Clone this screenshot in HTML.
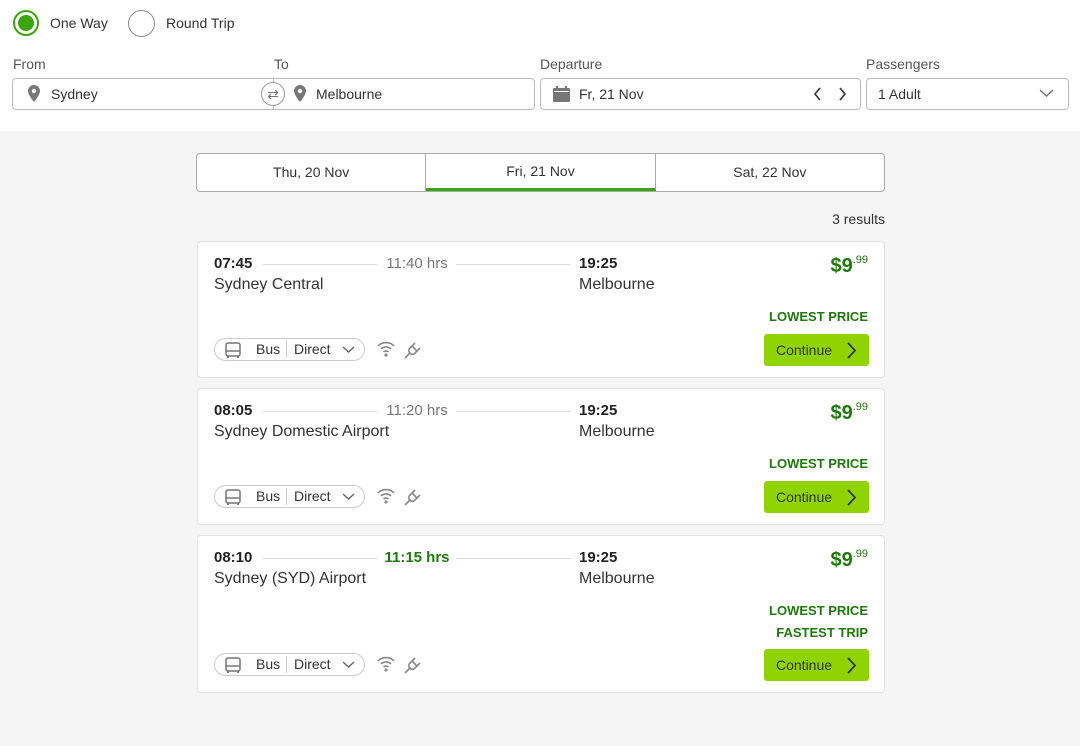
<!DOCTYPE html>
<html><head><meta charset="utf-8"><style>
*{box-sizing:border-box;margin:0;padding:0}
body{width:1080px;height:746px;background:#f5f5f5;font-family:"Liberation Sans",sans-serif;color:#333;position:relative;overflow:hidden;font-size:14px}
.a{position:absolute}
.hdr{left:0;top:0;width:1080px;height:131px;background:#fff}
.lbl{color:#555;font-size:14px}
.box{border:1px solid #bbb;border-radius:4px;background:#fff;height:32px}
.tabs{left:196px;top:153px;width:689px;height:39px;border:1px solid #aaa;border-radius:4px;background:#fff;display:flex}
.tabs div{flex:1;text-align:center;line-height:37px;font-size:14px;color:#333;border-right:1px solid #aaa}
.tabs div:last-child{border-right:none}
.card{left:197px;width:688px;background:#fff;border:1px solid #e2e2e2;border-radius:4px}
.t{font-weight:bold;font-size:15px;color:#222;top:13px}
.st{font-size:16px;color:#333;top:34px}
.ln{height:1px;background:#ddd;top:22px}
.dur{top:13px;font-size:15px;color:#777;width:80px;text-align:center;left:179px}
.pr{right:16px;top:12px;color:#1e7a0a;font-weight:bold;font-size:20px}
.pr sup{font-size:11px;vertical-align:9px;font-weight:normal}
.tag{right:16px;color:#1e7a0a;font-weight:bold;font-size:13px}
.pill{left:16px;width:151px;height:23px;border:1px solid #ccc;border-radius:12px;font-size:14px;color:#333}
.btn{left:566px;width:105px;height:32px;background:#8fd400;border-radius:3px;font-size:14px;color:#333;line-height:32px;padding-left:12px}
</style></head><body>
<div class="a hdr"></div>
<div class="a" style="left:13px;top:10px;width:26px;height:26px;border:2px solid #3aa50c;border-radius:50%"><div style="margin:3px;width:16px;height:16px;border-radius:50%;background:#3aa50c"></div></div>
<div class="a" style="left:50px;top:15px;font-size:14px">One Way</div>
<div class="a" style="left:128px;top:10px;width:27px;height:27px;border:1.5px solid #888;border-radius:50%"></div>
<div class="a" style="left:166px;top:15px;font-size:14px">Round Trip</div>
<div class="a lbl" style="left:13px;top:56px">From</div>
<div class="a lbl" style="left:274px;top:56px">To</div>
<div class="a lbl" style="left:540px;top:56px">Departure</div>
<div class="a lbl" style="left:866px;top:56px">Passengers</div>
<div class="a box" style="left:12px;top:78px;width:523px"></div>
<div class="a" style="left:273px;top:78px;width:1px;height:32px;background:#bbb"></div>
<div class="a" style="left:261px;top:82px;width:24px;height:24px;border:1px solid #999;border-radius:50%;background:#fff;text-align:center;line-height:22px;color:#777;font-size:14px">⇄</div>
<svg class="a" style="left:28px;top:85px" width="12" height="17" viewBox="0 0 12 17"><path d="M6 0C2.7 0 0 2.6 0 5.9 0 10 6 17 6 17s6-7 6-11.1C12 2.6 9.3 0 6 0z" fill="#777"/><circle cx="6" cy="6" r="2.2" fill="#fff"/></svg>
<div class="a" style="left:51px;top:86px">Sydney</div>
<svg class="a" style="left:294px;top:85px" width="12" height="17" viewBox="0 0 12 17"><path d="M6 0C2.7 0 0 2.6 0 5.9 0 10 6 17 6 17s6-7 6-11.1C12 2.6 9.3 0 6 0z" fill="#777"/><circle cx="6" cy="6" r="2.2" fill="#fff"/></svg>
<div class="a" style="left:316px;top:86px">Melbourne</div>
<div class="a box" style="left:540px;top:78px;width:321px"></div>
<svg class="a" style="left:553px;top:86px" width="17" height="16" viewBox="0 0 17 16"><rect x="0" y="2" width="17" height="14" rx="1" fill="#777"/><rect x="3" y="0" width="2" height="4" fill="#777"/><rect x="12" y="0" width="2" height="4" fill="#777"/><rect x="1" y="5" width="15" height="1" fill="#fff"/></svg>
<div class="a" style="left:579px;top:86px">Fr, 21 Nov</div>
<svg class="a" style="left:812px;top:87px" width="40" height="14"><path d="M8 1L3 7l5 6M28 1l5 6-5 6" stroke="#333" stroke-width="1.6" fill="none"/></svg>
<div class="a box" style="left:866px;top:78px;width:203px"></div>
<div class="a" style="left:878px;top:86px">1 Adult</div>
<svg class="a" style="left:1039px;top:89px" width="15" height="9"><path d="M1 1l6.5 6L14 1" stroke="#777" stroke-width="1.5" fill="none"/></svg>

<div class="a tabs"><div>Thu, 20 Nov</div><div style="border-bottom:3px solid #3aa50c;line-height:34px">Fri, 21 Nov</div><div>Sat, 22 Nov</div></div>
<div class="a" style="right:195px;top:211px;font-size:14px;color:#333">3 results</div>

<div class="a card" style="top:241px;height:137px">
<div class="a t" style="left:16px">07:45</div><div class="a ln" style="left:65px;width:114px"></div><div class="a dur">11:40 hrs</div><div class="a ln" style="left:258px;width:115px"></div><div class="a t" style="left:381px">19:25</div>
<div class="a st" style="left:16px">Sydney Central</div><div class="a st" style="left:381px">Melbourne</div>
<div class="a pr">$9<sup>.99</sup></div>
<div class="a tag" style="top:67px">LOWEST PRICE</div>
<div class="a pill" style="top:96px"><svg class="a" style="left:10px;top:3px" width="16" height="17"><rect x="1" y="1" width="14" height="13" rx="2" stroke="#777" stroke-width="1.5" fill="none"/><path d="M1 9h14" stroke="#777" stroke-width="1.5"/><path d="M3 14v2M13 14v2" stroke="#777" stroke-width="2"/></svg><span class="a" style="left:41px;top:2px">Bus</span><span class="a" style="left:71px;top:2px;height:17px;width:1px;background:#ccc"></span><span class="a" style="left:79px;top:2px">Direct</span><svg class="a" style="left:127px;top:7px" width="13" height="8"><path d="M1 1l5.5 5L12 1" stroke="#666" stroke-width="1.4" fill="none"/></svg></div>
<svg class="a" style="left:178px;top:98px" width="20" height="18"><path d="M2 6a11 11 0 0 1 16 0M5 9a7 7 0 0 1 10 0M7.5 12a3.5 3.5 0 0 1 5 0" stroke="#888" stroke-width="1.6" fill="none"/><circle cx="10" cy="15" r="1.6" fill="#888"/></svg>
<svg class="a" style="left:205px;top:98px" width="20" height="20"><path d="M9 6l5 5-2.5 2.5a3 3 0 0 1-4 0l-1-1a3 3 0 0 1 0-4zM7 13l-5 5M12 3l-2.5 2.5M17 8l-2.5 2.5" stroke="#888" stroke-width="1.6" fill="none"/></svg>
<div class="a btn" style="top:92px">Continue<svg class="a" style="left:83px;top:8px" width="10" height="17"><path d="M1 1l7 7.5L1 16" stroke="#333" stroke-width="1.8" fill="none"/></svg></div>
</div>

<div class="a card" style="top:388px;height:137px">
<div class="a t" style="left:16px">08:05</div><div class="a ln" style="left:65px;width:114px"></div><div class="a dur">11:20 hrs</div><div class="a ln" style="left:258px;width:115px"></div><div class="a t" style="left:381px">19:25</div>
<div class="a st" style="left:16px">Sydney Domestic Airport</div><div class="a st" style="left:381px">Melbourne</div>
<div class="a pr">$9<sup>.99</sup></div>
<div class="a tag" style="top:67px">LOWEST PRICE</div>
<div class="a pill" style="top:96px"><svg class="a" style="left:10px;top:3px" width="16" height="17"><rect x="1" y="1" width="14" height="13" rx="2" stroke="#777" stroke-width="1.5" fill="none"/><path d="M1 9h14" stroke="#777" stroke-width="1.5"/><path d="M3 14v2M13 14v2" stroke="#777" stroke-width="2"/></svg><span class="a" style="left:41px;top:2px">Bus</span><span class="a" style="left:71px;top:2px;height:17px;width:1px;background:#ccc"></span><span class="a" style="left:79px;top:2px">Direct</span><svg class="a" style="left:127px;top:7px" width="13" height="8"><path d="M1 1l5.5 5L12 1" stroke="#666" stroke-width="1.4" fill="none"/></svg></div>
<svg class="a" style="left:178px;top:98px" width="20" height="18"><path d="M2 6a11 11 0 0 1 16 0M5 9a7 7 0 0 1 10 0M7.5 12a3.5 3.5 0 0 1 5 0" stroke="#888" stroke-width="1.6" fill="none"/><circle cx="10" cy="15" r="1.6" fill="#888"/></svg>
<svg class="a" style="left:205px;top:98px" width="20" height="20"><path d="M9 6l5 5-2.5 2.5a3 3 0 0 1-4 0l-1-1a3 3 0 0 1 0-4zM7 13l-5 5M12 3l-2.5 2.5M17 8l-2.5 2.5" stroke="#888" stroke-width="1.6" fill="none"/></svg>
<div class="a btn" style="top:92px">Continue<svg class="a" style="left:83px;top:8px" width="10" height="17"><path d="M1 1l7 7.5L1 16" stroke="#333" stroke-width="1.8" fill="none"/></svg></div>
</div>

<div class="a card" style="top:535px;height:158px">
<div class="a t" style="left:16px">08:10</div><div class="a ln" style="left:65px;width:114px"></div><div class="a dur" style="color:#1e7a0a;font-weight:bold">11:15 hrs</div><div class="a ln" style="left:258px;width:115px"></div><div class="a t" style="left:381px">19:25</div>
<div class="a st" style="left:16px">Sydney (SYD) Airport</div><div class="a st" style="left:381px">Melbourne</div>
<div class="a pr">$9<sup>.99</sup></div>
<div class="a tag" style="top:67px">LOWEST PRICE</div>
<div class="a tag" style="top:89px">FASTEST TRIP</div>
<div class="a pill" style="top:117px"><svg class="a" style="left:10px;top:3px" width="16" height="17"><rect x="1" y="1" width="14" height="13" rx="2" stroke="#777" stroke-width="1.5" fill="none"/><path d="M1 9h14" stroke="#777" stroke-width="1.5"/><path d="M3 14v2M13 14v2" stroke="#777" stroke-width="2"/></svg><span class="a" style="left:41px;top:2px">Bus</span><span class="a" style="left:71px;top:2px;height:17px;width:1px;background:#ccc"></span><span class="a" style="left:79px;top:2px">Direct</span><svg class="a" style="left:127px;top:7px" width="13" height="8"><path d="M1 1l5.5 5L12 1" stroke="#666" stroke-width="1.4" fill="none"/></svg></div>
<svg class="a" style="left:178px;top:119px" width="20" height="18"><path d="M2 6a11 11 0 0 1 16 0M5 9a7 7 0 0 1 10 0M7.5 12a3.5 3.5 0 0 1 5 0" stroke="#888" stroke-width="1.6" fill="none"/><circle cx="10" cy="15" r="1.6" fill="#888"/></svg>
<svg class="a" style="left:205px;top:119px" width="20" height="20"><path d="M9 6l5 5-2.5 2.5a3 3 0 0 1-4 0l-1-1a3 3 0 0 1 0-4zM7 13l-5 5M12 3l-2.5 2.5M17 8l-2.5 2.5" stroke="#888" stroke-width="1.6" fill="none"/></svg>
<div class="a btn" style="top:113px">Continue<svg class="a" style="left:83px;top:8px" width="10" height="17"><path d="M1 1l7 7.5L1 16" stroke="#333" stroke-width="1.8" fill="none"/></svg></div>
</div>
</body></html>
